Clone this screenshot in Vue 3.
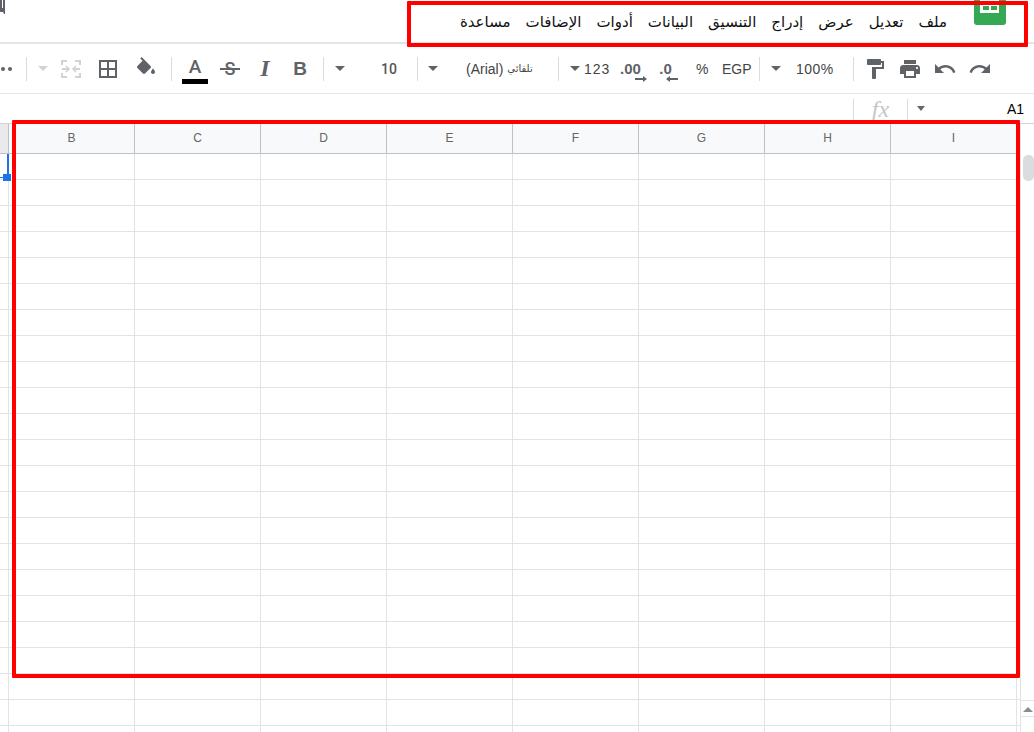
<script setup>
const menu = ['ملف', 'تعديل', 'عرض', 'إدراج', 'التنسيق', 'البيانات', 'أدوات', 'الإضافات', 'مساعدة']
const cols = ['B', 'C', 'D', 'E', 'F', 'G', 'H', 'I']
const rows = Array.from({ length: 23 }, (_, i) => i)
</script>

<template>
  <div class="app">
    <header class="top">
      <svg class="cut" viewBox="0 0 6 15" width="6" height="15"><path d="M0 0h2v8h1V0h2v14H4l-1-2H0z" fill="#5f6368" /></svg>
      <nav class="menu">
        <span v-for="m in menu" :key="m" class="menu-item">{{ m }}</span>
      </nav>
      <div class="logo"><div class="logo-sheet"><i></i><i></i></div></div>
    </header>

    <div class="toolbar">
      <span class="dots"><i></i><i></i></span>
      <span class="sep s1"></span>
      <span class="caret dim c1"></span>
      <svg class="merge" viewBox="0 0 20 18" width="20" height="18" fill="none" stroke="#d0d2d4" stroke-width="2">
        <path d="M1 5V1h5M14 1h5v4M1 13v4h5M14 17h5v-4M1 9h6M13 9h6" />
        <path d="M5 6l3 3-3 3M15 6l-3 3 3 3" stroke-width="1.6" />
      </svg>
      <svg class="ic borders" viewBox="0 0 24 24" width="24" height="24"><path d="M3 3v18h18V3H3zm8 16H5v-6h6v6zm0-8H5V5h6v6zm8 8h-6v-6h6v6zm0-8h-6V5h6v6z" /></svg>
      <svg class="ic fill" viewBox="0 0 24 24" width="24" height="24"><path d="M16.56 8.94 7.62 0 6.21 1.41l2.38 2.38-5.15 5.15c-.59.59-.59 1.54 0 2.12l5.5 5.5c.59.59 1.53.59 2.12 0l5.5-5.5c.59-.58.59-1.53 0-2.12zM19 11.5s-2 2.17-2 3.5c0 1.1.9 2 2 2s2-.9 2-2c0-1.33-2-3.5-2-3.5z" /></svg>
      <span class="sep s2"></span>
      <span class="color-a">A<i></i></span>
      <span class="strike">S</span>
      <span class="ital">I</span>
      <span class="bold">B</span>
      <span class="sep s3"></span>
      <span class="caret c2"></span>
      <span class="size">10</span>
      <span class="sep s4"></span>
      <span class="caret c3"></span>
      <span class="font"><span class="latin">(Arial)</span> <span class="auto">تلقائي</span></span>
      <span class="sep s5"></span>
      <span class="caret c4"></span>
      <span class="num n123">123</span>
      <span class="dec d2">.00<svg viewBox="0 0 12 6" width="12" height="6"><path d="M0 2h8V0l4 3-4 3V4H0z" fill="#5f6368" /></svg></span>
      <span class="dec d1">.0<svg viewBox="0 0 12 6" width="12" height="6"><path d="M12 2H4V0L0 3l4 3V4h8z" fill="#5f6368" /></svg></span>
      <span class="num pct">%</span>
      <span class="num egp">EGP</span>
      <span class="sep s6"></span>
      <span class="caret c5"></span>
      <span class="num zoom">100%</span>
      <span class="sep s7"></span>
      <svg class="ic paint" viewBox="0 0 24 24" width="24" height="24"><path d="M18 4V3c0-.55-.45-1-1-1H5c-.55 0-1 .45-1 1v4c0 .55.45 1 1 1h12c.55 0 1-.45 1-1V6h1v4H9v11c0 .55.45 1 1 1h2c.55 0 1-.45 1-1v-9h8V4h-3z" /></svg>
      <svg class="ic print" viewBox="0 0 24 24" width="24" height="24"><path d="M19 8H5c-1.66 0-3 1.34-3 3v6h4v4h12v-4h4v-6c0-1.66-1.34-3-3-3zm-3 11H8v-5h8v5zm3-7c-.55 0-1-.45-1-1s.45-1 1-1 1 .45 1 1-.45 1-1 1zm-1-9H6v4h12V3z" /></svg>
      <svg class="ic undo" viewBox="0 0 24 24" width="24" height="24"><path d="M12.5 8c-2.65 0-5.05.99-6.9 2.6L2 7v9h9l-3.62-3.62c1.39-1.16 3.16-1.88 5.12-1.88 3.54 0 6.55 2.31 7.6 5.5l2.37-.78C21.08 11.03 17.15 8 12.5 8z" /></svg>
      <svg class="ic redo" viewBox="0 0 24 24" width="24" height="24"><path d="M18.4 10.6C16.55 8.99 14.15 8 11.5 8c-4.65 0-8.58 3.03-9.96 7.22L3.9 16c1.05-3.19 4.05-5.5 7.6-5.5 1.95 0 3.73.72 5.12 1.88L13 16h9V7l-3.6 3.6z" /></svg>
    </div>

    <div class="formula">
      <span class="f-sep"></span>
      <span class="fx">fx</span>
      <span class="f-sep second"></span>
      <span class="caret f-caret"></span>
      <span class="cell-name">A1</span>
    </div>

    <div class="sheet">
      <div class="grid">
        <div class="row head">
          <div class="cell first"></div>
          <div v-for="c in cols" :key="c" class="cell">{{ c }}</div>
          <div class="tail"></div>
        </div>
        <div v-for="r in rows" :key="r" class="row">
          <div class="cell first"></div>
          <div v-for="c in cols" :key="c" class="cell"></div>
          <div class="tail"></div>
        </div>
        <div class="sel-line"></div>
        <div class="sel-dash"></div>
        <div class="sel-handle"></div>
      </div>
      <aside class="scroll">
        <div class="thumb"></div>
        <div class="arrow"><i></i></div>
        <div class="arrow last"></div>
      </aside>
    </div>

    <div class="mark mark-menu"></div>
    <div class="mark mark-grid"></div>
  </div>
</template>

<style scoped>
.app {
  position: relative;
  width: 1034px;
  height: 732px;
  overflow: hidden;
  background: #fff;
  font-family: "Liberation Sans", "DejaVu Sans", sans-serif;
  color: #3c4043;
}

/* top bar */
.top {
  box-sizing: border-box;
  height: 44px;
  display: flex;
  align-items: flex-start;
  border-bottom: 2px solid #e4e5e6;
}
.cut { flex: none; }
.menu {
  margin-left: auto;
  margin-top: 12px;
  display: flex;
  direction: rtl;
  gap: 15px;
  font-family: "DejaVu Sans", sans-serif;
  font-size: 15px;
  line-height: 20px;
  color: #111;
}
.logo {
  flex: none;
  box-sizing: border-box;
  width: 32px;
  height: 25px;
  margin: 0 28px 0 27px;
  padding: 0 7px 0 6px;
  background: #34a853;
  border-radius: 0 0 3px 3px;
}
.logo-sheet {
  box-sizing: border-box;
  height: 13px;
  padding: 6px 2px 0 3px;
  display: flex;
  gap: 2px;
  align-items: flex-start;
  background: #fff;
}
.logo-sheet i {
  flex: 1;
  height: 4px;
  background: #34a853;
}

/* toolbar */
.toolbar {
  box-sizing: border-box;
  height: 50px;
  display: flex;
  align-items: center;
  border-bottom: 1px solid #e4e5e6;
  font-size: 14px;
  color: #444;
}
.toolbar > * { flex: none; }
.sep {
  width: 1px;
  height: 24px;
  background: #dadce0;
}
.caret {
  width: 0;
  height: 0;
  border-left: 5px solid transparent;
  border-right: 5px solid transparent;
  border-top: 5px solid #5f6368;
}
.caret.dim { border-top-color: #d0d2d4; }
.ic { fill: #5f6368; }

.dots { display: flex; gap: 3px; width: 11px; margin-left: 1px; }
.dots i { width: 4px; height: 4px; border-radius: 50%; background: #5f6368; }
.s1 { margin-left: 14px; }
.c1 { margin-left: 11px; }
.merge { margin-left: 13px; }
.borders { margin-left: 15px; }
.fill { margin-left: 14px; }
.s2 { margin-left: 13px; }
.color-a {
  margin-left: 10px;
  width: 26px;
  text-align: center;
  font-family: Roboto, sans-serif;
  font-size: 19px;
  font-weight: 500;
  line-height: 22px;
  color: #5f6368;
  display: flex;
  flex-direction: column;
  align-items: center;
  padding-top: 2px;
}
.color-a i {
  width: 26px;
  height: 5px;
  margin-top: 1px;
  background: #000;
}
.strike {
  position: relative;
  width: 20px;
  margin-left: 12px;
  text-align: center;
  font-family: Roboto, sans-serif;
  font-size: 18px;
  font-weight: 500;
  color: #5f6368;
}
.strike::after {
  content: "";
  position: absolute;
  left: 0;
  right: 0;
  top: 10px;
  height: 2px;
  background: #5f6368;
}
.ital {
  width: 20px;
  margin-left: 15px;
  text-align: center;
  font-family: "Liberation Serif", serif;
  font-size: 24px;
  font-style: italic;
  font-weight: 700;
  color: #5f6368;
}
.bold {
  width: 20px;
  margin-left: 15px;
  text-align: center;
  font-size: 19px;
  font-weight: 700;
  color: #5f6368;
}
.s3 { margin-left: 13px; }
.c2 { margin-left: 11px; }
.size { width: 20px; margin-left: 34px; text-align: center; font-size: 14px; font-family: Roboto, sans-serif; font-weight: 500; color: #555; }
.s4 { margin-left: 18px; }
.c3 { margin-left: 10px; }
.font { width: 74px; margin-left: 28px; white-space: nowrap; display: flex; align-items: center; gap: 4px; }
.latin { font-size: 14px; }
.auto { font-family: "DejaVu Sans", sans-serif; font-size: 10px; }
.s5 { margin-left: 18px; }
.c4 { margin-left: 11px; }
.n123 { width: 27px; margin-left: 4px; letter-spacing: 1px; }
.dec {
  position: relative;
  width: 23px;
  font-size: 15px;
  font-weight: 700;
  color: #5f6368;
}
.dec svg { position: absolute; right: -4px; top: 16px; }
.d2 { margin-left: 9px; }
.d1 { margin-left: 12px; width: 21px; text-align: center; }
.d1 svg { right: -2px; }
.pct { width: 12px; margin-left: 20px; font-size: 14px; }
.egp { width: 32px; margin-left: 14px; }
.s6 { margin-left: 5px; }
.c5 { margin-left: 11px; }
.zoom { width: 40px; margin-left: 15px; letter-spacing: .5px; }
.s7 { margin-left: 17px; }
.paint { margin-left: 9px; }
.print { margin-left: 11px; }
.undo { margin-left: 11px; }
.redo { margin-left: 11px; }

/* formula bar */
.formula {
  box-sizing: border-box;
  height: 29px;
  padding-left: 853px;
  display: flex;
  align-items: center;
}
.f-sep { width: 1px; height: 24px; background: #dadce0; flex: none; align-self: flex-end; }
.fx {
  width: 53px;
  text-align: center;
  font-family: "Liberation Serif", serif;
  font-style: italic;
  font-size: 24px;
  line-height: 26px;
  color: #c4c6c8;
}
.second { margin-right: 9px; }
.f-caret { border-left-width: 4px; border-right-width: 4px; border-top-color: #666; flex: none; }
.cell-name {
  margin-left: auto;
  margin-right: 10px;
  font-size: 14px;
  color: #000;
}

/* sheet */
.sheet { display: flex; height: 609px; }
.grid { position: relative; width: 1020px; overflow: hidden; flex: none; }
.row { display: flex; height: 26px; }
.cell {
  box-sizing: border-box;
  width: 126px;
  flex: none;
  border-right: 1px solid #e2e3e4;
  border-bottom: 1px solid #e2e3e4;
}
.cell.first { width: 9px; }
.tail { flex: 1; border-bottom: 1px solid #e2e3e4; }
.head { height: 31px; border-top: 1px solid #d4d5d6; box-sizing: border-box; }
.head .cell {
  background: #f8f9fa;
  border-color: #c0c1c2;
  text-align: center;
  font-size: 12px;
  line-height: 29px;
  color: #666;
}
.head .first { background: #e8eaed; }
.head .tail { border-bottom-color: #c0c1c2; }
.sel-line { position: absolute; left: 7px; top: 31px; width: 2px; height: 24px; background: #1a73e8; }
.sel-dash { position: absolute; left: 0; top: 54px; width: 3px; height: 1px; background: #1a73e8; }
.sel-handle { position: absolute; left: 3px; top: 51px; width: 8px; height: 7px; background: #1a73e8; }

.scroll {
  box-sizing: border-box;
  width: 14px;
  flex: none;
  border-left: 1px solid #e2e3e4;
  border-top: 1px solid #d4d5d6;
  display: flex;
  flex-direction: column;
}
.thumb {
  width: 11px;
  height: 33px;
  margin: 31px 0 0 2px;
  border-radius: 5px;
  background: #dadce0;
}
.arrow {
  box-sizing: border-box;
  height: 18px;
  margin-top: 519px;
  border-top: 1px solid #e2e3e4;
  display: flex;
  justify-content: center;
  padding-top: 6px;
}
.arrow i {
  width: 0;
  height: 0;
  border-left: 5px solid transparent;
  border-right: 5px solid transparent;
  border-bottom: 5px solid #8a8c8e;
}
.arrow.last { margin-top: 0; }

/* annotations */
.mark {
  position: absolute;
  box-sizing: border-box;
  border: 4px solid #f00;
  border-radius: 1px;
}
.mark-menu { left: 407px; top: 1px; width: 621px; height: 46px; }
.mark-grid { left: 12px; top: 120px; width: 1008px; height: 558px; }
</style>
